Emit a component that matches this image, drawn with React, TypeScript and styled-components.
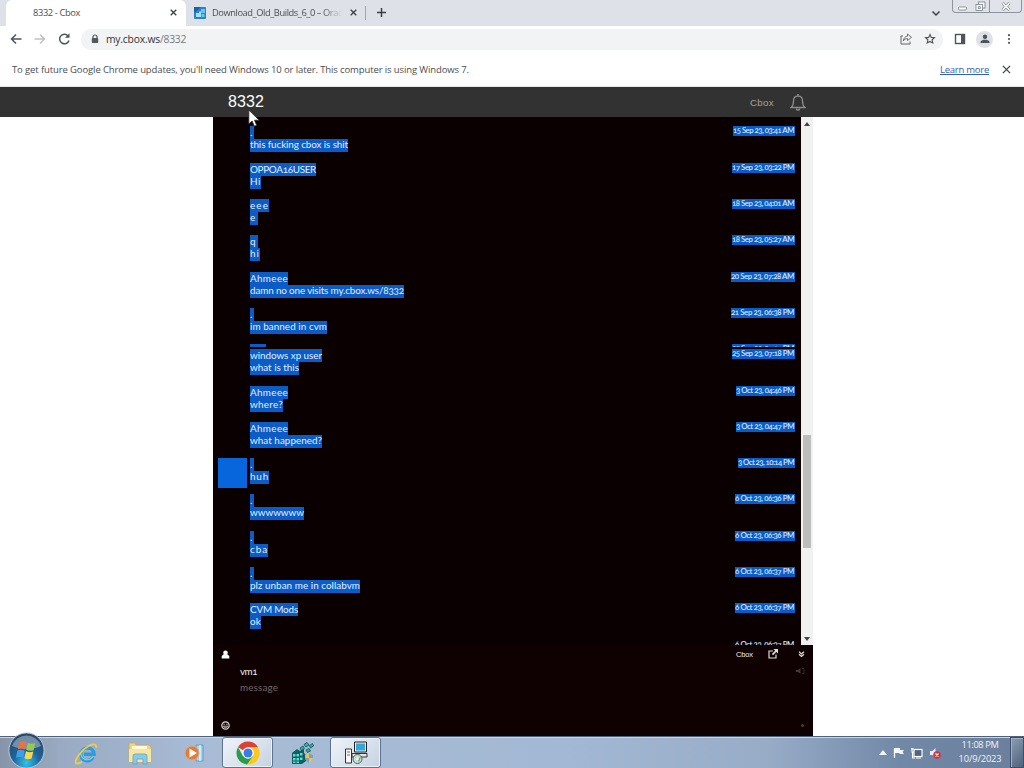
import React, { useLayoutEffect, useRef, useState } from "react";
import styled, { createGlobalStyle, css } from "styled-components";

const Global = createGlobalStyle`
  * { box-sizing: border-box; }
  html, body { margin: 0; padding: 0; background: #fff; }
  body { font-family: "Open Sans", "Noto Sans", sans-serif; overflow: hidden; }
`;

/* Tracks text out or in so that it fills a known width. */
const FitBox = styled.span<{ $w: number }>`
  display: block;
  width: ${p => p.$w}px;
  white-space: pre;
  flex: none;
`;

function Fit({ w, children }: { w: number; children: string }) {
  const ref = useRef<HTMLSpanElement>(null);
  const [track, setTrack] = useState(0);
  useLayoutEffect(() => {
    if (ref.current) {
      const natural = ref.current.getBoundingClientRect().width;
      setTrack((w - natural) / children.length);
    }
  }, []);
  return (
    <FitBox $w={w}>
      <span ref={ref} style={{ letterSpacing: track }}>{children}</span>
    </FitBox>
  );
}

const Screen = styled.div`
  width: 1024px;
  height: 768px;
  display: flex;
  flex-direction: column;
  overflow: hidden;
  position: relative;
`;

/* ---------- browser chrome ---------- */
const TabStrip = styled.div`
  height: 26px;
  flex: none;
  background: #dee1e8;
  display: flex;
  font-size: 9.3px;
  color: #4a4d51;
`;
const Tab = styled.div<{ $active?: boolean }>`
  display: flex;
  align-items: center;
  height: 26px;
  ${p => p.$active
    ? css`width: 180px; margin-left: 6px; padding: 0 9px 1px 27px; background: #fff; border-radius: 6px 6px 0 0;`
    : css`width: 180px; padding: 0 8px 1px 8px; border-right: 1px solid #a3a6ad; height: 14px; margin-top: 6px;`}
`;
const Spacer = styled.div`flex: 1;`;
const TabTitle = styled.div<{ $fade?: boolean }>`
  overflow: hidden;
  ${p => p.$fade && css`margin-left: 6px; mask-image: linear-gradient(90deg, #000 85%, transparent);`}
`;
const NewTab = styled.div`
  display: flex;
  align-items: center;
  padding: 0 0 1px 10px;
`;
const StripEnd = styled.div`
  display: flex;
  margin-left: auto;
  padding-right: 2px;
  gap: 11px;
`;
const Chevron = styled.div`padding-top: 10px; line-height: 0;`;
const WindowButtons = styled.div`
  width: 70px;
  height: 13px;
  display: flex;
  border: 1px solid #8f949c;
  border-top: 0;
  border-radius: 0 0 4px 4px;
  background: #e0e3e9;
`;
const WindowButton = styled.div<{ $w: number; $line?: boolean }>`
  width: ${p => p.$w}px;
  display: flex;
  justify-content: center;
  align-items: center;
  border-left: ${p => (p.$line ? "1px solid #8f949c" : "0")};
`;
const Toolbar = styled.div`
  height: 27px;
  flex: none;
  display: flex;
  align-items: center;
  background: #fff;
  padding: 0 9px 1px 9px;
`;
const NavIcons = styled.div`
  display: flex;
  gap: 10px;
  width: 72px;
`;
const AddressBar = styled.div`
  width: 862px;
  height: 21px;
  border-radius: 10px;
  background: #f1f3f4;
  display: flex;
  align-items: center;
  padding: 0 7px 0 10px;
  font-size: 10.3px;
  color: #303336;
  em { font-style: normal; color: #777b80; }
`;
const Url = styled.div`
  margin: -1px 0 0 7px;
  display: flex;
`;
const AddressIcons = styled.div`
  margin-left: auto;
  display: flex;
  gap: 12px;
`;
const ToolIcons = styled.div`
  display: flex;
  align-items: center;
  gap: 10px;
  margin-left: 11px;
`;
const Avatar = styled.div`
  width: 17px;
  height: 17px;
  border-radius: 50%;
  background: #dfe1e8;
  display: flex;
  align-items: center;
  justify-content: center;
`;
const InfoBar = styled.div`
  height: 34px;
  flex: none;
  display: flex;
  align-items: center;
  padding: 0 13px 0 12px;
  border-bottom: 1px solid #e3e5e7;
  font-size: 9.5px;
  color: #4a4d51;
`;
const LearnMore = styled.div`
  margin-left: auto;
  margin-right: 13px;
  color: #2f62bd;
  text-decoration: underline;
`;

/* ---------- page ---------- */
const Header = styled.div`
  height: 30px;
  flex: none;
  background: #323232;
  display: flex;
  align-items: center;
  padding: 0 218px 0 228px;
  font-family: "Liberation Sans", Arial, sans-serif;
`;
const RoomTitle = styled.div`
  color: #fff;
  font-size: 16px;
`;
const HeaderLink = styled.div`
  margin-left: auto;
  margin-right: 16px;
  color: #a3a3a3;
  font-size: 9.8px;
`;
const Body = styled.div`
  flex: 1;
  display: flex;
  justify-content: center;
  padding-left: 2px;
  background: #fff;
  min-height: 0;
`;
const Box = styled.div`
  width: 600px;
  display: flex;
  flex-direction: column;
  background: #0c0001;
  font-family: Lato, "Open Sans", sans-serif;
  font-variant-numeric: oldstyle-nums;
`;
const Feed = styled.div`
  height: 528px;
  flex: none;
  display: flex;
  overflow: hidden;
`;
const Messages = styled.div`
  width: 588px;
  padding: 9px 6px 0 5px;
  overflow: hidden;
  background: #0a0001;
`;
const Message = styled.div<{ $h: number }>`
  height: ${p => p.$h}px;
  display: flex;
  overflow: hidden;
`;
const Thumb = styled.div<{ $on?: boolean }>`
  width: 29px;
  height: 30px;
  margin-right: 3px;
  flex: none;
  background: ${p => (p.$on ? "#0866dc" : "transparent")};
`;
const Lines = styled.div`
  display: flex;
  flex-direction: column;
  align-items: flex-start;
  flex: 1;
`;
const Selected = styled.div`
  height: 13px;
  line-height: 12px;
  font-size: 9.9px;
  color: #e2efff;
  background: #0b5cc6;
  & + & { line-height: 11px; }
`;
const Stamp = styled.div<{ $plain?: boolean }>`
  height: 10px;
  line-height: 9px;
  padding-right: 1px;
  font-size: 7.8px;
  font-weight: 600;
  color: #d5e7ff;
  background: ${p => (p.$plain ? "transparent" : "#0b5cc6")};
`;
const ScrollBar = styled.div`
  width: 12px;
  background: #f1f1f1;
  display: flex;
  flex-direction: column;
  align-items: center;
  padding: 5px 0 4px;
`;
const ScrollThumb = styled.div`
  width: 8px;
  height: 113px;
  margin-top: 309px;
  background: #bdbdbd;
`;
const Arrow = styled.div<{ $down?: boolean }>`
  width: 0;
  height: 0;
  border: 3px solid transparent;
  ${p => p.$down
    ? css`border-top: 4px solid #444; border-bottom: 0; margin-top: auto;`
    : css`border-bottom: 4px solid #444; border-top: 0;`}
`;
const Form = styled.div`
  flex: 1;
  display: flex;
  flex-direction: column;
  background: #0f0001;
  color: #f2eeee;
`;
const FormBar = styled.div`
  height: 18px;
  display: flex;
  align-items: center;
  padding: 0 8px 0 8px;
`;
const BarLink = styled.div`
  margin-left: auto;
  margin-right: 15px;
  font: 7.5px "Liberation Sans", Arial, sans-serif;
`;
const Collapse = styled.div`margin-left: 20px; line-height: 0;`;
const Field = styled.div<{ $dim?: boolean }>`
  height: 16px;
  display: flex;
  align-items: center;
  justify-content: space-between;
  padding: 0 8px 0 27px;
  font-size: 9.8px;
  color: ${p => (p.$dim ? "#77686a" : "#f2eeee")};
`;
const FormFoot = styled.div`
  margin-top: auto;
  height: 21px;
  display: flex;
  align-items: center;
  justify-content: space-between;
  padding: 0 9px 0 8px;
`;
const Dot = styled.div`
  width: 3px;
  height: 3px;
  border-radius: 50%;
  background: #4a3c3e;
`;

/* ---------- taskbar ---------- */
const Taskbar = styled.div`
  height: 32px;
  flex: none;
  display: flex;
  align-items: center;
  border-top: 1px solid #4f6178;
  box-shadow: inset 0 1px 0 #c7d6e8;
  background: linear-gradient(90deg, #8794a8 0, #99aac2 6%, #a9bcd6 20%, #a3b8d4 55%, #98acc8 75%, #7188a6 88%, #6a7f9c 100%);
`;
const Slot = styled.div<{ $open?: boolean }>`
  width: 51px;
  height: 31px;
  margin-right: 3px;
  display: flex;
  align-items: center;
  justify-content: center;
  ${p => p.$open && css`
    border: 1px solid #5f7390;
    border-radius: 3px;
    background: linear-gradient(135deg, #f0f4f9, #c6d2e2);
    box-shadow: inset 0 0 0 1px #eaf1f8;
  `}
`;
const StartSlot = styled.div`
  width: 60px;
  height: 37px;
  margin-top: -5px;
  padding-left: 8px;
  display: flex;
  align-items: center;
  flex: none;
`;
const Tray = styled.div`
  margin-left: auto;
  display: flex;
  align-items: center;
  height: 100%;
  gap: 6px;
`;
const Clock = styled.div`
  display: flex;
  flex-direction: column;
  align-items: center;
  width: 48px;
  margin: -1px 0 0 9px;
  font-size: 9.3px;
  line-height: 14px;
  color: #edf3fa;
`;
const ShowDesktop = styled.div`
  width: 14px;
  height: 31px;
  border: 1px solid #3d4f66;
  box-shadow: inset 1px 1px 0 #9fb1c8;
  background: linear-gradient(135deg, #8d9db2, #4e627d);
`;
const Pointer = styled.div`
  position: absolute;
  left: 248px;
  top: 109px;
  line-height: 0;
`;

const Drawing = styled.svg`flex: none;`;
const Svg = ({ w, h = w, box, children }: { w: number; h?: number; box?: string; children: React.ReactNode }) => (
  <Drawing width={w} height={h} viewBox={box ?? `0 0 ${w} ${h}`} fill="none">{children}</Drawing>
);

const Cross = ({ size = 7, thin }: { size?: number; thin?: boolean }) => (
  <Svg w={size} box="0 0 8 8"><path d="M.8.8l6.4 6.4M7.2.8L.8 7.2" stroke="#3c4043" strokeWidth={thin ? 1.1 : 1.5} /></Svg>
);

type Row = { h: number; n?: string; nw?: number; t?: string; tw?: number; d: string; dw: number; on?: boolean; plain?: boolean };
const rows: Row[] = [
  { h: 37, n: ".", nw: 4, t: "this fucking cbox is shit", tw: 98, d: "15 Sep 23, 03:41 AM", dw: 62 },
  { h: 36, n: "OPPOA16USER", nw: 66, t: "Hi", tw: 11, d: "17 Sep 23, 03:22 PM", dw: 63 },
  { h: 36, n: "eee", nw: 19, t: "e", tw: 8, d: "18 Sep 23, 04:01 AM", dw: 63 },
  { h: 37, n: "q", nw: 8, t: "hi", tw: 10, d: "18 Sep 23, 05:27 AM", dw: 63 },
  { h: 36, n: "Ahmeee", nw: 38, t: "damn no one visits my.cbox.ws/8332", tw: 154, d: "20 Sep 23, 07:28 AM", dw: 64 },
  { h: 36, n: ".", nw: 4, t: "im banned in cvm", tw: 77, d: "21 Sep 23, 06:38 PM", dw: 64 },
  { h: 3, n: " ", nw: 16, d: "25 Sep 23, 07:17 PM", dw: 63 },
  { h: 2, d: "", dw: 0 },
  { h: 37, n: "windows xp user", nw: 72, t: "what is this", tw: 49, d: "25 Sep 23, 07:18 PM", dw: 63 },
  { h: 36, n: "Ahmeee", nw: 38, t: "where?", tw: 33, d: "3 Oct 23, 04:46 PM", dw: 59 },
  { h: 36, n: "Ahmeee", nw: 38, t: "what happened?", tw: 72, d: "3 Oct 23, 04:47 PM", dw: 59 },
  { h: 36, n: ".", nw: 4, t: "huh", tw: 19, d: "3 Oct 23, 10:14 PM", dw: 57, on: true },
  { h: 37, n: ".", nw: 4, t: "wwwwwww", tw: 54, d: "6 Oct 23, 06:36 PM", dw: 60 },
  { h: 36, n: ".", nw: 4, t: "cba", tw: 18, d: "6 Oct 23, 06:36 PM", dw: 60 },
  { h: 36, n: ".", nw: 4, t: "plz unban me in collabvm", tw: 110, d: "6 Oct 23, 06:37 PM", dw: 60 },
  { h: 37, n: "CVM Mods", nw: 48, t: "ok", tw: 11, d: "6 Oct 23, 06:37 PM", dw: 60 },
  { h: 36, d: "6 Oct 23, 06:37 PM", dw: 60, plain: true },
];

function MessageRow({ r }: { r: Row }) {
  return (
    <Message $h={r.h}>
      <Thumb $on={r.on} />
      <Lines>
        {r.n && <Selected><Fit w={r.nw!}>{r.n}</Fit></Selected>}
        {r.t && <Selected><Fit w={r.tw!}>{r.t}</Fit></Selected>}
      </Lines>
      {r.d && <Stamp $plain={r.plain}><Fit w={r.dw - 1}>{r.d}</Fit></Stamp>}
    </Message>
  );
}

function StartOrb() {
  return (
    <Svg w={37}>
      <defs>
        <radialGradient id="orb" cx=".5" cy=".85" r=".85">
          <stop offset="0" stopColor="#35c3ea" /><stop offset=".45" stopColor="#1c639b" /><stop offset="1" stopColor="#31445f" />
        </radialGradient>
      </defs>
      <circle cx="18.5" cy="18.5" r="17.6" fill="url(#orb)" stroke="#b8cadc" strokeWidth="1" />
      <path d="M4 14a15 14 0 0 1 29 0c-8 4-20 4-29 0z" fill="#b8ccd9" opacity=".5" />
      <path d="M11.5 10c3-1.700 5-1 7 .2l-1.500 7.300c-2.500-1.400-4.500-1.500-7.200-.2z" fill="#ef7139" />
      <path d="M19.800 10.800c2.700 1.300 5 1.200 7.500.2l-1.700 7.200c-2.500 1-5 .8-7.300-.4z" fill="#9ac94b" />
      <path d="M9.400 18.600c2.700-1.300 4.900-1 7.200.2L15 26c-2.400-1.400-4.500-1.300-7-.2z" fill="#3f9ee8" />
      <path d="M18 19.200c2.600 1.300 4.900 1.300 7.300.2l-1.700 7.200c-2.600 1.100-5 .9-7.200-.3z" fill="#fbd84b" />
    </Svg>
  );
}

export default function App() {
  return (
    <Screen>
      <Global />
      <TabStrip>
        <Tab $active>
          <Fit w={47}>8332 - Cbox</Fit>
          <Spacer />
          <Cross />
        </Tab>
        <Tab>
          <Svg w={12}>
            <rect width="12" height="12" rx="1" fill="#2585ca" />
            <path d="M0 0h7L0 6z" fill="#1763a9" />
            <path d="M2 6h3v4H2zM5 4.500h2V10H5z" fill="#a9def5" /><path d="M7 2h4v4H7zM7.500 7h3v3h-3z" fill="#6cc3ee" />
          </Svg>
          <TabTitle $fade><Fit w={130}>Download_Old_Builds_6_0 – Orac</Fit></TabTitle>
          <Spacer />
          <Cross />
        </Tab>
        <NewTab><Svg w={11}><path d="M5.500 1v9M1 5.500h9" stroke="#3c4043" strokeWidth="1.500" /></Svg></NewTab>
        <StripEnd>
          <Chevron><Svg w={10} h={7}><path d="M1.500 1.500L5 5l3.500-3.500" stroke="#3c4043" strokeWidth="1.500" /></Svg></Chevron>
          <WindowButtons>
            <WindowButton $w={19}><Svg w={11} h={9}><rect x="1.500" y="5" width="8" height="3" rx="1" fill="#fff" stroke="#777d86" strokeWidth=".8" /></Svg></WindowButton>
            <WindowButton $w={17}>
              <Svg w={11}><rect x="3.500" y="1" width="6.500" height="6" fill="#fff" stroke="#777d86" strokeWidth=".8" /><rect x="1" y="3.500" width="6.500" height="6" fill="#fff" stroke="#777d86" strokeWidth=".8" /><rect x="3.300" y="5.700" width="2" height="1.700" stroke="#777d86" strokeWidth=".8" /></Svg>
            </WindowButton>
            <WindowButton $w={32} $line>
              <Svg w={10} h={9}><path d="M1.500 1l7 7M8.500 1l-7 7" stroke="#8b9098" strokeWidth="3" /><path d="M1.700 1.200l6.600 6.600M8.300 1.200L1.700 7.800" stroke="#fff" strokeWidth="1.500" /></Svg>
            </WindowButton>
          </WindowButtons>
        </StripEnd>
      </TabStrip>

      <Toolbar>
        <NavIcons>
          <Svg w={14}><path d="M12.500 7H2.500M7 2.500L2.500 7 7 11.500" stroke="#505357" strokeWidth="1.500" /></Svg>
          <Svg w={14}><path d="M1.500 7h10M7 2.500L11.500 7 7 11.500" stroke="#bfc1c4" strokeWidth="1.500" /></Svg>
          <Svg w={14}><path d="M12 8.500A4.800 4.800 0 1 1 10.900 3.700L11.700 4.600" stroke="#505357" strokeWidth="1.500" /><path d="M12.500 1.200v4.600H7.900z" fill="#505357" /></Svg>
        </NavIcons>
        <AddressBar>
          <Svg w={8} h={10}><path d="M2 4.500V3a2 2 0 0 1 4 0v1.500" stroke="#54585c" strokeWidth="1.200" /><rect x=".8" y="4" width="6.400" height="5" rx=".8" fill="#54585c" /></Svg>
          <Url><Fit w={54}>my.cbox.ws</Fit><em><Fit w={26}>/8332</Fit></em></Url>
          <AddressIcons>
            <Svg w={12}><path d="M3 3H1v8h9V8.500" stroke="#606468" /><path d="M7.500 1l4 3.300-4 3.300V5.600C5.500 5.500 4.300 6.300 3.300 8c.2-2.800 1.700-4.500 4.200-4.900z" stroke="#606468" strokeWidth=".9" /></Svg>
            <Svg w={12}><path d="M6 1.500l1.300 2.900 3.200.3-2.400 2.100.7 3.200L6 8.400 3.200 10l.7-3.200-2.400-2.100 3.200-.3z" stroke="#505357" strokeWidth="1.100" /></Svg>
          </AddressIcons>
        </AddressBar>
        <ToolIcons>
          <Svg w={12}><rect x="1.500" y="1.500" width="9" height="9" stroke="#505357" strokeWidth="1.400" /><path d="M7 1h4v10H7z" fill="#505357" /></Svg>
          <Avatar><Svg w={10}><circle cx="5" cy="2.700" r="2.200" fill="#505357" /><path d="M.5 9V7.800C1.500 6.300 3 5.800 5 5.800s3.500.5 4.500 2V9z" fill="#505357" /></Svg></Avatar>
          <Svg w={12}><circle cx="6" cy="2.200" r="1.100" fill="#505357" /><circle cx="6" cy="6" r="1.100" fill="#505357" /><circle cx="6" cy="9.800" r="1.100" fill="#505357" /></Svg>
        </ToolIcons>
      </Toolbar>

      <InfoBar>
        <Fit w={457}>To get future Google Chrome updates, you'll need Windows 10 or later. This computer is using Windows 7.</Fit>
        <LearnMore><Fit w={49}>Learn more</Fit></LearnMore>
        <Cross size={9} thin />
      </InfoBar>

      <Header>
        <RoomTitle><Fit w={36}>8332</Fit></RoomTitle>
        <HeaderLink><Fit w={24}>Cbox</Fit></HeaderLink>
        <Svg w={16} h={18}>
          <path d="M1 14.500c2-1.500 2.500-3 2.500-6.500 0-3 1.700-4.800 4.500-4.800S12.500 5 12.500 8c0 3.500.5 5 2.500 6.500z" stroke="#8c8c8c" strokeWidth="1.300" />
          <path d="M8 3V1M6.300 15.500a1.700 1.500 0 0 0 3.400 0" stroke="#8c8c8c" strokeWidth="1.500" />
        </Svg>
      </Header>

      <Body>
        <Box>
          <Feed>
            <Messages>{rows.map((r, i) => <MessageRow key={i} r={r} />)}</Messages>
            <ScrollBar><Arrow /><ScrollThumb /><Arrow $down /></ScrollBar>
          </Feed>
          <Form>
            <FormBar>
              <Svg w={9}><circle cx="4.500" cy="2.700" r="2.300" fill="#fff" /><path d="M.7 8.500V6l2-1.800h3.600l2 1.800v2.500z" fill="#fff" /></Svg>
              <BarLink><Fit w={17}>Cbox</Fit></BarLink>
              <Svg w={10}><path d="M5 2H1v7h7V5.500" stroke="#ddd" strokeWidth="1.200" /><path d="M5.500 0H10v4.500L8.300 2.900 5 6.200 3.800 5l3.300-3.300z" fill="#ddd" /></Svg>
              <Collapse><Svg w={7}><path d="M1 .8l2.500 2.200L6 .8M1 3.300L3.500 5.500 6 3.300" stroke="#ddd" strokeWidth="1.300" /></Svg></Collapse>
            </FormBar>
            <Field><Fit w={17}>vm1</Fit><Svg w={9} h={8}><path d="M0 3h2l2.500-2v6L2 5H0z" fill="#453739" /><path d="M6 1.500h2v5H6" stroke="#34282a" /></Svg></Field>
            <Field $dim><Fit w={38}>message</Fit></Field>
            <FormFoot>
              <Svg w={9}><circle cx="4.500" cy="4.500" r="3.700" stroke="#ddd" strokeWidth="1.200" /><path d="M2.300 5.200c.8 1.900 3.600 1.900 4.400 0z" stroke="#ddd" strokeWidth=".8" /><path d="M2.500 3.300h1.200M5.300 3.300h1.200" stroke="#ddd" /></Svg>
              <Dot />
            </FormFoot>
          </Form>
        </Box>
      </Body>

      <Taskbar>
        <StartSlot><StartOrb /></StartSlot>
        <Slot>
          <Svg w={24}>
            <path d="M19 16C16 22 7 20.500 7 13.200c0-7.900 12.800-8.500 13.100 0H10" stroke="#2c9cdc" strokeWidth="3.400" />
            <path d="M19 15.500C15 21 7.500 19 7 13" stroke="#85d3f3" strokeWidth="1.200" />
            <path d="M22.300 7c.7-6.500-7.500-3.500-13.500 2.500S-.5 22 3 22.500c1.500.2 3.500-.8 5-2" stroke="#efcb48" strokeWidth="1.900" />
          </Svg>
        </Slot>
        <Slot>
          <Svg w={24}>
            <path d="M1 2h6l1 2h13l2 2v15H1z" fill="#efd67b" stroke="#c9ac4e" strokeWidth=".8" />
            <path d="M4 5h15v5H4z" fill="#fff8db" /><path d="M1 8h22v13H1z" fill="#f7e6a0" />
            <path d="M5 23v-8q0-2 2-2h10q2 0 2 2v8h-4v-5H9v5z" fill="#8acbe4" stroke="#5ba5c8" strokeWidth=".8" />
          </Svg>
        </Slot>
        <Slot>
          <Svg w={22}>
            <path d="M13 3h7v16h-7z" fill="#a7d4ec" stroke="#5b9fc8" /><path d="M17 3v16" stroke="#fff" />
            <circle cx="9" cy="11" r="7" fill="#ea7b2e" stroke="#c3b3a5" /><path d="M6.500 6.500L14 11l-7.500 4.500z" fill="#fff" />
          </Svg>
        </Slot>
        <Slot $open>
          <Svg w={24}>
            <path d="M12 12V6.200h10A11.500 11.500 0 0 1 11 23.500z" fill="#fbc91b" />
            <path d="M12 12L2 6.300A11.500 11.500 0 0 1 22 6.300H12z" fill="#dc3f33" />
            <path d="M2 6.300A11.500 11.500 0 0 0 11 23.500L17 15 7 15z" fill="#289b4c" />
            <circle cx="12" cy="12" r="5.800" fill="#fff" /><circle cx="12" cy="12" r="4.500" fill="#3a7be5" />
          </Svg>
        </Slot>
        <Slot>
          <Svg w={24}>
            <path d="M2 12l5-4 3 2 4-3v5l2 2v6l-4 3H2z" fill="#0f5f63" />
            <path d="M3 13h2.500v2.500H3zM6.500 13H9v2.500H6.500zM10 12h2.500v2.500H10zM3 17h2.500v2.500H3zM6.500 17H9v2.500H6.500zM10 16.500h2.500V19H10zM3 20.500h2.500V22H3zM6.500 20.500H9V22H6.500z" fill="#5fdcd4" />
            <path d="M14 3.500l3-2 2 2.500-3 2zM19.500 4.500l3-2 1 2.500-3 2zM10 7l3-2 1.500 2.500-3 2zM16 9l3-1.500 1.500 2.500-3 1.500z" fill="#2fb5b2" stroke="#0a4b54" strokeWidth=".8" />
            <path d="M15 14l4-2 4 2c0 4-1 6-4 8-3-2-4-4-4-8z" fill="#e9c44a" /><path d="M19 12l4 2v3h-4zM15 17h4v5c-2-1-4-3-4-5z" fill="#7f9fc0" />
          </Svg>
        </Slot>
        <Slot $open>
          <Svg w={24}>
            <path d="M1.500 8h6v14h-6z" fill="#f6f6f6" stroke="#333" /><path d="M3 11h3M3 14h3" stroke="#777" />
            <path d="M10.500 1h12v10h-12z" fill="#eee" stroke="#222" /><path d="M12 2.500h9v7h-9z" fill="#35a5de" />
            <path d="M8 12.500h15v3.500H8z" fill="#e5e5e5" stroke="#333" />
            <circle cx="13.500" cy="18" r="4.500" fill="#cce0d4" stroke="#4b5f52" /><path d="M10 15l3 3 4-2-2 5z" fill="#61a875" /><circle cx="13.500" cy="18" r="1.300" fill="#fff" />
          </Svg>
        </Slot>
        <Tray>
          <Svg w={8} h={5}><path d="M4 0l4 5H0z" fill="#f1f5fa" /></Svg>
          <Svg w={12}><path d="M1.500 1v10" stroke="#fff" strokeWidth="1.300" /><path d="M2 1h5v2h4l-1.500 2L11 7H6.500V6H2z" fill="#f4f7fb" /></Svg>
          <Svg w={12}><rect x="3" y="2.500" width="8" height="7" fill="#51647e" stroke="#fff" strokeWidth="1.200" /><path d="M5 11h5M1 1v4h2M1.500 5v6H4M0 2h3" stroke="#fff" strokeWidth="1.100" /></Svg>
          <Svg w={12}><path d="M1 4h2.500l3-3v10l-3-3H1z" fill="#e7edf4" /><circle cx="8" cy="8" r="3.800" fill="#d4343c" /><path d="M6.500 6.500l3 3M9.500 6.500l-3 3" stroke="#fff" strokeWidth="1.100" /></Svg>
          <Clock><Fit w={37}>11:08 PM</Fit><Fit w={43}>10/9/2023</Fit></Clock>
          <ShowDesktop />
        </Tray>
      </Taskbar>
      <Pointer>
        <Svg w={13} h={19}><path d="M.8 1v14l3.300-3 2.200 5.300 2.400-1-2.200-5.100h4.800z" fill="#fff" stroke="#222" strokeWidth=".8" /></Svg>
      </Pointer>
    </Screen>
  );
}
